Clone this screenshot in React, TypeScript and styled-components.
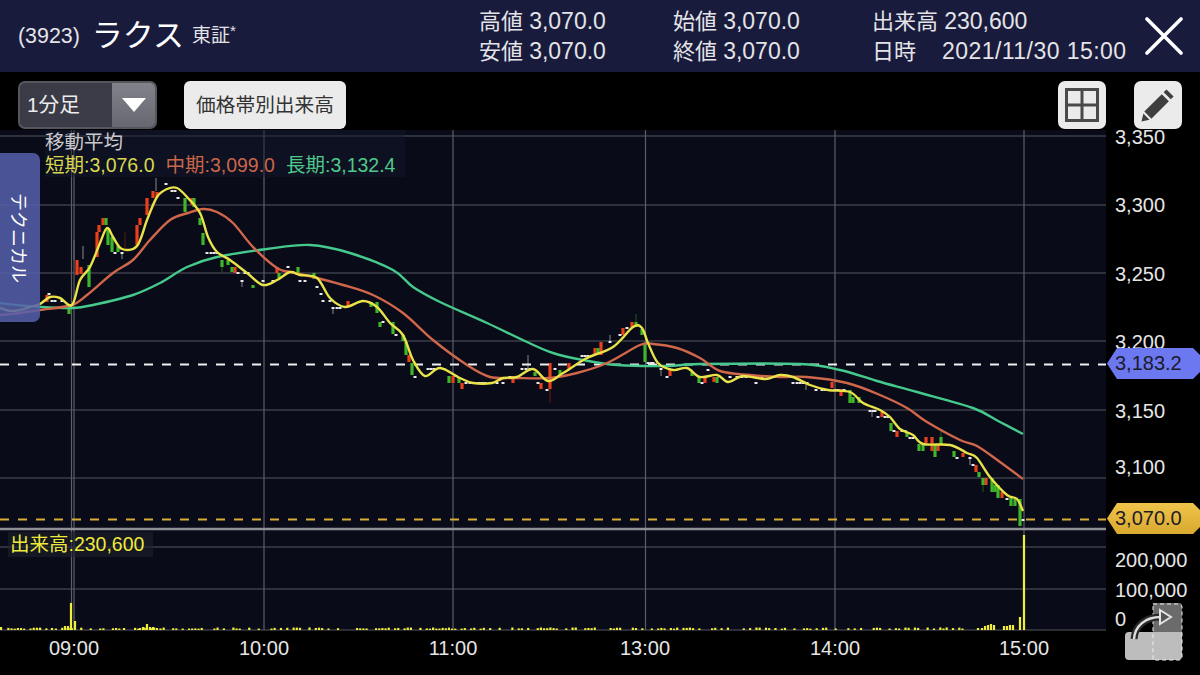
import React from 'react';
import styled, { createGlobalStyle } from 'styled-components';

const FONT = '"Liberation Sans", "Noto Sans CJK JP", sans-serif';

const GlobalStyle = createGlobalStyle`
  html, body {
    margin: 0;
    background: #000;
    font-family: ${FONT};
  }
`;

type Pt = [number, number];

const SHORT_MA: Pt[] = [
  [0, 308], [10, 311], [20, 310], [30, 307], [40, 304], [50, 297], [60, 298], [72, 305], [80, 280], [90, 267], [100, 243], [107, 228], [113, 237], [122, 249],
  [137, 246], [147, 220], [157, 197], [167, 189], [177, 188], [187, 197], [200, 213], [208, 237], [217, 252], [230, 260],
  [247, 273], [263, 285], [277, 280], [290, 272], [300, 275], [317, 278], [330, 298], [345, 307], [363, 301], [377, 307],
  [390, 323], [403, 335], [413, 360], [425, 376], [440, 368], [460, 378], [473, 383], [492, 383], [503, 378], [517, 377],
  [533, 369], [548, 381], [563, 373], [587, 358], [613, 347], [633, 327], [642, 328], [648, 343], [658, 363], [673, 370],
  [687, 368], [700, 377], [717, 375], [728, 382], [743, 376], [765, 379], [780, 375], [793, 377], [810, 385], [828, 390],
  [850, 392], [863, 403], [880, 410], [890, 417], [900, 429], [913, 435], [923, 444], [950, 445], [967, 453], [977, 458],
  [990, 477], [1007, 495], [1017, 499], [1023, 511],
];

const MID_MA: Pt[] = [
  [0, 315], [20, 313], [40, 310], [72, 305], [87, 295], [113, 273], [133, 260], [150, 240], [170, 220], [188, 213], [203, 209], [217, 212],
  [233, 223], [253, 247], [277, 268], [290, 272], [313, 277], [343, 285], [373, 295], [403, 313], [433, 340], [467, 365],
  [490, 377], [517, 378], [550, 378], [577, 373], [607, 363], [640, 345], [653, 344], [677, 348], [700, 358], [720, 371],
  [750, 375], [780, 377], [807, 377], [847, 383], [880, 395], [907, 408], [927, 422], [960, 440], [977, 446], [1000, 462],
  [1023, 479],
];

const LONG_MA: Pt[] = [
  [0, 303], [17, 305], [40, 307], [72, 308], [93, 305], [133, 295], [160, 283], [187, 267], [217, 257], [267, 249], [310, 245], [350, 253],
  [393, 270], [413, 287], [440, 302], [487, 323], [527, 342], [553, 353], [583, 360], [617, 365], [667, 366], [700, 364],
  [800, 364], [840, 370], [877, 381], [917, 392], [973, 408], [1000, 422], [1023, 434],
];

// x, top, bottom
const RED: number[][] = [
  [47, 295, 302], [77, 260, 275], [81, 267, 274], [97, 232, 257], [99, 225, 232], [103, 218, 225], [137, 225, 245],
  [140, 218, 225], [147, 198, 215], [153, 191, 198], [157, 192, 197], [192, 198, 205], [235, 267, 273], [277, 267, 273],
  [348, 301, 306], [409, 355, 362], [453, 376, 383], [462, 383, 389], [500, 377, 381], [513, 376, 383], [541, 383, 389],
  [550, 363, 389], [563, 376, 377], [569, 363, 369], [595, 348, 355], [601, 342, 355], [623, 328, 335], [632, 322, 327],
  [670, 370, 376], [705, 377, 383], [714, 377, 382], [832, 382, 388], [841, 389, 396], [882, 412, 417], [897, 431, 437],
  [926, 437, 443], [932, 437, 451], [938, 445, 451], [963, 453, 457], [976, 465, 472], [986, 478, 485], [1002, 492, 498],
];
const GREEN: number[][] = [
  [69, 304, 314], [89, 265, 287], [106, 218, 225], [108, 228, 245], [112, 237, 252], [118, 246, 252], [185, 198, 212],
  [194, 198, 207], [200, 218, 225], [203, 233, 245], [222, 260, 267], [228, 260, 265], [232, 267, 272], [253, 285, 288],
  [279, 273, 278], [298, 267, 273], [314, 273, 279], [371, 302, 307], [377, 302, 313], [380, 322, 327], [393, 322, 334],
  [403, 335, 341], [406, 342, 355], [412, 363, 375], [449, 376, 383], [459, 377, 383], [535, 372, 376], [560, 370, 376],
  [598, 348, 354], [636, 322, 327], [642, 329, 335], [645, 343, 362], [692, 372, 376], [699, 376, 383], [717, 377, 383],
  [850, 390, 403], [853, 397, 403], [859, 397, 403], [891, 423, 431], [907, 433, 437], [919, 444, 451], [923, 444, 451],
  [935, 445, 457], [941, 437, 444], [954, 451, 457], [979, 472, 477], [983, 478, 485], [992, 478, 492], [995, 485, 492],
  [998, 485, 498], [1011, 498, 506], [1015, 499, 506], [1020, 499, 526],
];
// x, top, bottom, colour
const WICKS: [number, number, number, string][] = [
  [156, 178, 191, '#8a8a8a'], [83, 246, 259, '#8a8a8a'], [74, 240, 260, '#666'], [122, 253, 259, '#8a8a8a'],
  [125, 232, 252, '#5a1c10'], [242, 281, 287, '#8a8a8a'], [333, 308, 314, '#8a8a8a'], [528, 355, 369, '#8a8a8a'],
  [550, 389, 403, '#6a1c0e'], [610, 335, 342, '#8a8a8a'], [636, 314, 322, '#1f5a14'], [661, 369, 376, '#8a8a8a'],
  [941, 431, 437, '#1f5a14'], [983, 485, 492, '#1f5a14'], [872, 411, 417, '#8a8a8a'], [806, 383, 390, '#8a8a8a'],
  [970, 458, 465, '#8a8a8a'], [222, 267, 273, '#1f5a14'],
];
const DOJI: Pt[] = [
  [49, 294], [52, 301], [55, 301], [62, 301], [166, 184], [172, 191], [175, 191], [178, 198], [115, 253], [122, 253],
  [207, 253], [211, 253], [214, 253], [217, 253], [238, 273], [245, 273], [248, 273], [242, 281], [263, 281], [273, 281],
  [288, 267], [293, 273], [300, 281], [305, 281], [317, 287], [321, 294], [323, 301], [330, 301], [333, 308], [337, 308],
  [340, 308], [383, 322], [396, 335], [415, 377], [428, 369], [431, 369], [434, 369], [444, 369], [456, 376], [466, 383],
  [470, 383], [475, 383], [479, 383], [482, 383], [485, 383], [497, 383], [503, 383], [510, 377], [522, 369], [526, 369],
  [530, 369], [538, 383], [547, 390], [555, 369], [582, 356], [585, 356], [588, 356], [610, 342], [620, 335], [627, 328],
  [648, 363], [651, 363], [653, 363], [661, 369], [667, 377], [702, 383], [708, 370], [730, 377], [737, 377], [740, 377],
  [742, 377], [746, 377], [756, 383], [762, 377], [793, 383], [797, 383], [800, 383], [803, 383], [807, 383], [816, 390],
  [822, 390], [825, 390], [828, 390], [835, 390], [838, 390], [844, 390], [870, 411], [873, 411], [875, 411], [878, 417],
  [885, 417], [888, 417], [894, 431], [902, 431], [905, 431], [910, 438], [913, 438], [948, 445], [957, 458], [970, 458],
  [973, 465], [1007, 499], [1023, 520],
];

const VOL_PEAKS: Pt[] = [
  [1, 3], [40, 2], [52, 2], [65, 4], [68, 4], [71, 27], [75, 9], [124, 2], [140, 2], [143, 3], [147, 6], [150, 3], [153, 3],
  [157, 2], [978, 2], [982, 2], [985, 4], [988, 5], [991, 6], [994, 5], [1004, 4], [1007, 4], [1010, 5], [1013, 5],
  [1020, 13], [1024, 95],
];

const volumeBars = (): Pt[] => {
  const bars: Pt[] = [];
  for (let x = 2; x < 975; x += 3.17) {
    const seed = Math.sin(x * 12.9898) * 43758.5453;
    const r = seed - Math.floor(seed);
    if (r > 0.45) bars.push([x, 1 + r * r * 1.6]);
  }
  return bars.concat(VOL_PEAKS);
};

// catmull-rom through the sampled points
const smooth = (pts: Pt[]) => {
  let d = `M${pts[0][0]} ${pts[0][1]}`;
  for (let i = 0; i < pts.length - 1; i++) {
    const p0 = pts[i - 1] || pts[i];
    const p1 = pts[i];
    const p2 = pts[i + 1];
    const p3 = pts[i + 2] || p2;
    const c1x = p1[0] + (p2[0] - p0[0]) / 6;
    const c1y = p1[1] + (p2[1] - p0[1]) / 6;
    const c2x = p2[0] - (p3[0] - p1[0]) / 6;
    const c2y = p2[1] - (p3[1] - p1[1]) / 6;
    d += `C${c1x.toFixed(1)} ${c1y.toFixed(1)} ${c2x.toFixed(1)} ${c2y.toFixed(1)} ${p2[0]} ${p2[1]}`;
  }
  return d;
};

const PRICE_TICKS: [string, number][] = [
  ['3,350', 144], ['3,300', 212], ['3,250', 281], ['3,200', 349], ['3,150', 418], ['3,100', 474],
];
const VOL_TICKS: [string, number][] = [['200,000', 567], ['100,000', 597], ['0', 626]];
const TIME_TICKS: [string, number][] = [
  ['09:00', 74], ['10:00', 264], ['11:00', 453], ['13:00', 645], ['14:00', 835], ['15:00', 1024],
];
const H_GRID = [136, 205, 273, 341, 410, 478, 547, 589, 630];
const V_GRID = [71.5, 74, 264, 453, 645.5, 835, 1024];

const Chart: React.FC = () => (
  <ChartSvg viewBox="0 130 1200 545" width={1200} height={545}>
    <rect x={0} y={130} width={1106} height={500} fill="#090b18" />
    {H_GRID.map((y) => (
      <line key={y} x1={0} x2={1106} y1={y} y2={y} stroke="#55565f" strokeWidth={1.2} />
    ))}
    {V_GRID.map((x) => (
      <line key={x} x1={x} x2={x} y1={130} y2={630} stroke="#5d5e68" strokeWidth={1.2} />
    ))}
    <line x1={0} x2={1106} y1={529} y2={529} stroke="#8f8f96" strokeWidth={2.5} />

    {WICKS.map(([x, y1, y2, c], i) => (
      <line key={i} x1={x} x2={x} y1={y1} y2={y2} stroke={c} strokeWidth={1} />
    ))}
    {RED.map(([x, y1, y2]) => (
      <rect key={`r${x}${y1}`} x={x - 1.6} y={y1} width={3.2} height={y2 - y1} fill="#e8401c" />
    ))}
    {GREEN.map(([x, y1, y2]) => (
      <rect key={`g${x}${y1}`} x={x - 1.6} y={y1} width={3.2} height={y2 - y1} fill="#3fb52a" />
    ))}
    {DOJI.map(([x, y]) => (
      <rect key={`d${x}${y}`} x={x - 1.5} y={y - 1} width={3} height={2} fill="#e8e8e8" />
    ))}

    <line x1={0} x2={1106} y1={364.5} y2={364.5} stroke="#f0f0f0" strokeWidth={2} strokeDasharray="9 9" />
    <line x1={0} x2={1106} y1={519.5} y2={519.5} stroke="#d9ac36" strokeWidth={2} strokeDasharray="9 9" />

    <path d={smooth(LONG_MA)} fill="none" stroke="#46c98c" strokeWidth={2.4} />
    <path d={smooth(MID_MA)} fill="none" stroke="#d0674a" strokeWidth={2.4} />
    <path d={smooth(SHORT_MA)} fill="none" stroke="#e9e34a" strokeWidth={2.4} />

    {volumeBars().map(([x, h], i) => (
      <rect key={i} x={x - 1.1} y={630 - h} width={2.2} height={h} fill="#f2ee3c" />
    ))}

    {PRICE_TICKS.map(([t, y]) => (
      <TickText key={t} x={1115} y={y}>{t}</TickText>
    ))}
    {VOL_TICKS.map(([t, y]) => (
      <TickText key={t} x={1115} y={y}>{t}</TickText>
    ))}
    {TIME_TICKS.map(([t, x]) => (
      <TickText key={t} x={x} y={655} textAnchor="middle">{t}</TickText>
    ))}
  </ChartSvg>
);

const App: React.FC = () => (
  <Page>
    <GlobalStyle />
    <Header>
      <TitleBlock>
        <Code>(3923)</Code>
        <Name>ラクス</Name>
        <Market>東証<Star>*</Star></Market>
      </TitleBlock>
      <Stats>
        <Stat>高値 <StatValue>3,070.0</StatValue></Stat>
        <Stat>始値 <StatValue>3,070.0</StatValue></Stat>
        <Stat>出来高 <StatValue>230,600</StatValue></Stat>
        <Stat>安値 <StatValue>3,070.0</StatValue></Stat>
        <Stat>終値 <StatValue>3,070.0</StatValue></Stat>
        <Stat>日時<StatDate>2021/11/30 15:00</StatDate></Stat>
      </Stats>
      <CloseButton aria-label="close">
        <svg width="38" height="38" viewBox="0 0 38 38">
          <path d="M2 2L36 36M36 2L2 36" stroke="#fff" strokeWidth="3.6" strokeLinecap="round" />
        </svg>
      </CloseButton>
    </Header>

    <Toolbar>
      <Select>
        <SelectLabel>1分足</SelectLabel>
        <SelectArrow>
          <svg width="24" height="14" viewBox="0 0 24 14">
            <path d="M0 0H24L12 14Z" fill="#fff" />
          </svg>
        </SelectArrow>
      </Select>
      <TextButton>価格帯別出来高</TextButton>
      <ToolSpacer />
      <IconButton aria-label="layout">
        <svg width="34" height="34" viewBox="0 0 34 34">
          <path d="M1.5 1.5H32.5V32.5H1.5ZM17 1.5V32.5M1.5 17H32.5" fill="none" stroke="#4a4a4a" strokeWidth="3" />
        </svg>
      </IconButton>
      <IconButton aria-label="draw">
        <svg width="34" height="34" viewBox="0 0 36 36">
          <path d="M27 1.5L34.5 9L31.5 12L24 4.5ZM22 6.5L29.5 14L11 32.5L3.5 25ZM2.5 27L9 33.5L0.5 35.5Z" fill="#3f3f3f" />
        </svg>
      </IconButton>
    </Toolbar>

    <ChartWrap>
      <Chart />
      <Legend>
        <LegendTitle>移動平均</LegendTitle>
        <LegendRow>
          <LegendValue $color="#d9d84f">短期:3,076.0</LegendValue>
          <LegendValue $color="#c9664a">中期:3,099.0</LegendValue>
          <LegendValue $color="#4fc98a">長期:3,132.4</LegendValue>
        </LegendRow>
      </Legend>
      <TechTab>テクニカル</TechTab>
      <VolumeLabel>出来高:230,600</VolumeLabel>
      <PriceTag $top={218} $color="#6b78f0">3,183.2</PriceTag>
      <PriceTag $top={373} $color="linear-gradient(#efc34a, #d9a92f)">3,070.0</PriceTag>
      <Rotate>
        <svg width="60" height="60" viewBox="0 0 60 60">
          <path d="M30 0H56a3 3 0 0 1 3 3V29H30Z" fill="#6b6b6b" />
          <path d="M6 29H59V53a4 4 0 0 1-4 4H6a4 4 0 0 1-4-4V33a4 4 0 0 1 4-4Z" fill="#bdbdbd" />
          <path d="M30 1H56a3 3 0 0 1 3 3V54a3 3 0 0 1-3 3H30Z" stroke="#eee" strokeWidth="1" strokeDasharray="4 3" fill="none" />
          <path d="M11 36C12 23 22 14 38 14" stroke="#2a2a2a" strokeWidth="7" fill="none" />
          <path d="M11 36C12 23 22 14 38 14" stroke="#ddd" strokeWidth="2.5" fill="none" />
          <path d="M37 7L48 14L37 21Z" fill="#555" stroke="#e4e4e4" strokeWidth="2" />
        </svg>
      </Rotate>
    </ChartWrap>
  </Page>
);

const Page = styled.div`
  width: 1200px;
  height: 675px;
  overflow: hidden;
  background: #000;
  display: flex;
  flex-direction: column;
`;

const Header = styled.header`
  height: 72px;
  flex: none;
  background: #191b3c;
  color: #fff;
  display: flex;
  align-items: center;
  padding-left: 18px;
  position: relative;
`;

const TitleBlock = styled.div`
  display: flex;
  align-items: center;
  width: 461px;
  flex: none;
`;

const Code = styled.span`
  font-size: 21.4px;
  line-height: 30px;
  color: #e4e4e8;
`;

const Name = styled.span`
  font-size: 31px;
  line-height: 40px;
  margin-left: 12px;
`;

const Market = styled.span`
  font-size: 19px;
  line-height: 30px;
  margin-left: 8px;
  color: #e4e4e8;
  display: flex;
`;

const Star = styled.span`
  font-size: 15px;
  line-height: 20px;
`;

const Stats = styled.div`
  display: grid;
  grid-template-columns: 194px 199px auto;
  row-gap: 5px;
  flex: none;
`;

const Stat = styled.div`
  font-size: 22px;
  line-height: 25px;
  color: #e4e4e8;
  white-space: nowrap;
`;

const StatValue = styled.span`
  font-size: 23px;
`;

const StatDate = styled.span`
  font-size: 23px;
  margin-left: 26px;
  letter-spacing: 0.45px;
`;

const CloseButton = styled.div`
  margin-left: auto;
  margin-right: 17px;
  display: flex;
`;

const Toolbar = styled.div`
  height: 58px;
  flex: none;
  display: flex;
  align-items: flex-start;
  padding: 9px 18px 0;
  box-sizing: border-box;
`;

const Select = styled.div`
  width: 139px;
  height: 48px;
  box-sizing: border-box;
  display: flex;
  border: 2px solid #55565e;
  border-radius: 7px;
  overflow: hidden;
  background: #3a3b46;
`;

const SelectLabel = styled.div`
  flex: 1;
  color: #ececec;
  font-size: 20.7px;
  line-height: 44px;
  padding-left: 7px;
`;

const SelectArrow = styled.div`
  width: 43px;
  background: linear-gradient(#81828a, #66676f);
  display: flex;
  align-items: center;
  justify-content: center;
`;

const TextButton = styled.div`
  margin-left: 27px;
  width: 162px;
  height: 48px;
  background: #ebebeb;
  border-radius: 6px;
  color: #333;
  font-size: 19.7px;
  line-height: 48px;
  text-align: center;
`;

const ToolSpacer = styled.div`
  flex: 1;
`;

const IconButton = styled.div`
  width: 48px;
  height: 48px;
  margin-left: 28px;
  background: #ebebeb;
  border-radius: 7px;
  display: flex;
  align-items: center;
  justify-content: center;
`;

const ChartWrap = styled.div`
  position: relative;
  flex: 1;
  min-height: 0;
`;

const ChartSvg = styled.svg`
  display: block;
  overflow: visible;
`;

const TickText = styled.text`
  font-family: ${FONT};
  font-size: 20px;
  fill: #e6e6e6;
`;

const Legend = styled.div`
  position: absolute;
  left: 45px;
  top: 0;
  background: rgba(22, 24, 44, 0.45);
  padding-right: 10px;
`;

const LegendTitle = styled.div`
  font-size: 19.5px;
  line-height: 24px;
  color: #c9c9cc;
`;

const LegendRow = styled.div`
  display: flex;
  gap: 11px;
  line-height: 23px;
`;

const LegendValue = styled.span<{ $color: string }>`
  font-size: 19.5px;
  color: ${(p) => p.$color};
`;

const TechTab = styled.div`
  position: absolute;
  left: 0;
  top: 23px;
  width: 40px;
  height: 169px;
  box-sizing: border-box;
  padding-top: 40px;
  background: rgba(84, 96, 170, 0.86);
  border-radius: 0 7px 7px 0;
  color: #fff;
  font-size: 18px;
  writing-mode: vertical-rl;
  text-orientation: sideways;
  display: flex;
  align-items: center;
`;

const VolumeLabel = styled.div`
  position: absolute;
  left: 8px;
  top: 402px;
  padding: 0 9px 0 2px;
  font-size: 19.5px;
  line-height: 25px;
  color: #eeea3c;
  background: rgba(30, 32, 44, 0.6);
`;

const PriceTag = styled.div<{ $top: number; $color: string }>`
  position: absolute;
  right: 0;
  top: ${(p) => p.$top}px;
  width: 93px;
  height: 31px;
  line-height: 31px;
  box-sizing: border-box;
  padding-left: 8px;
  font-size: 20px;
  color: #1b1b2b;
  background: ${(p) => p.$color};
  clip-path: polygon(0 50%, 10px 0, calc(100% - 7px) 0, 100% 7px, 100% calc(100% - 7px), calc(100% - 7px) 100%, 10px 100%);
`;

const Rotate = styled.div`
  position: absolute;
  left: 1123px;
  top: 473px;
  display: flex;
`;

export default App;
